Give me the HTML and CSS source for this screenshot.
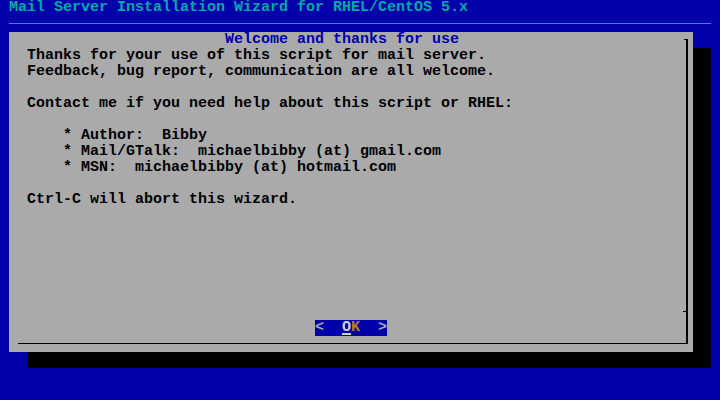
FILE: index.html
```html
<!DOCTYPE html>
<html>
<head>
<meta charset="utf-8">
<link rel="stylesheet" href="styles.css">
</head>
<body>
<div class="screen">
  <div class="backtitle">Mail Server Installation Wizard for RHEL/CentOS 5.x</div>
  <div class="rule"></div>
  <div class="dialog">
    <div class="dtitle">Welcome and thanks for use</div>
    <div class="frame">
      <div class="tick"></div>
      <div class="body">Thanks for your use of this script for mail server.
Feedback, bug report, communication are all welcome.

Contact me if you need help about this script or RHEL:

    * Author:  Bibby
    * Mail/GTalk:  michaelbibby (at) gmail.com
    * MSN:  michaelbibby (at) hotmail.com

Ctrl-C will abort this wizard.</div>
      <div class="tick sep"></div>
      <div class="buttons"><span class="btn"><span class="arrow">&lt;</span>  <span class="hot">O</span><span class="key">K</span>  <span class="arrow">&gt;</span></span></div>
    </div>
  </div>
</div>
</body>
</html>
```
FILE: styles.css
```css
html, body {
  margin: 0;
  padding: 0;
  background: #0000aa;
}
.screen {
  width: 720px;
  height: 400px;
  background: #0000aa;
  font-family: "Liberation Mono", "DejaVu Sans Mono", monospace;
  font-size: 15px;
  font-weight: bold;
  line-height: 16px;
  overflow: hidden;
}
.backtitle {
  height: 16px;
  padding-left: 9px;
  color: #00aaaa;
  white-space: pre;
}
.rule {
  height: 1px;
  margin: 7px 9px 8px 9px;
  background: #00aaaa;
}
.dialog {
  width: 675px;
  height: 320px;
  margin-left: 9px;
  padding-left: 9px;
  background: #aaaaaa;
  box-shadow: 18px 16px 0 0 #000000;
}
.dtitle {
  height: 16px;
  text-indent: 207px;
  color: #0000aa;
  white-space: pre;
}
.frame {
  width: 668px;
  height: 304px;
  margin-top: -9px;
  border-right: 2px solid #000;
  border-bottom: 1px solid #000;
}
.tick {
  width: 2px;
  height: 1px;
  margin-left: auto;
  background: #000;
}
.body {
  margin-top: 8px;
  padding-left: 9px;
  height: 160px;
  color: #000;
  white-space: pre;
}
.sep {
  margin-top: 103px;
  width: 3px;
}
.buttons {
  margin-top: 8px;
  height: 16px;
  padding-left: 297px;
  white-space: pre;
}
.btn {
  display: inline-block;
  width: 72px;
  height: 16px;
  background: #0000aa;
  color: #aaaaaa;
}
.hot {
  color: #d0d0d0;
  text-decoration: underline;
  text-decoration-thickness: 2px;
  text-underline-offset: 2px;
}
.key {
  color: #c47a24;
}
```
